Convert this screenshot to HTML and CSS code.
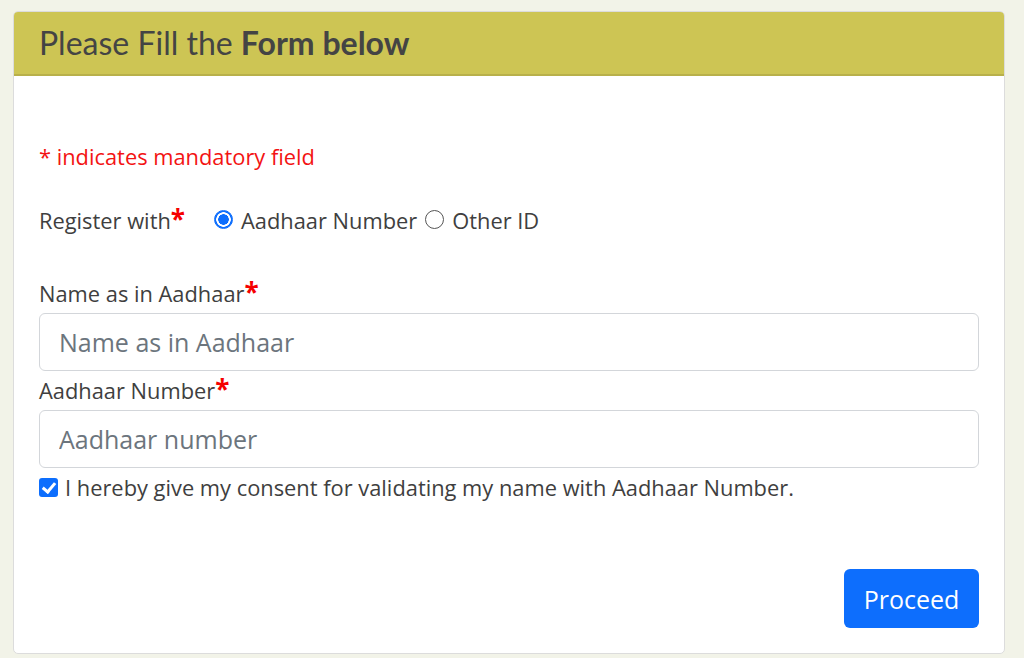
FILE: index.html
```html
<!DOCTYPE html>
<html lang="en">
<head>
<meta charset="utf-8">
<title>Please Fill the Form below</title>
<link rel="stylesheet" href="styles.css">
</head>
<body>
<div class="card">
  <div class="card-header">Please Fill the <b>Form below</b></div>
  <div class="card-body">
    <p class="mandatory">* indicates mandatory field</p>
    <div class="register-row">
      <span class="label-text">Register with<span class="star">*</span></span>
      <label class="radio-opt"><input type="radio" name="reg" class="radio" checked> Aadhaar Number</label>
      <label class="radio-opt"><input type="radio" name="reg" class="radio"> Other ID</label>
    </div>
    <label class="field-label" for="name">Name as in Aadhaar<span class="star">*</span></label>
    <input id="name" class="form-control" type="text" placeholder="Name as in Aadhaar">
    <label class="field-label second" for="aadhaar">Aadhaar Number<span class="star">*</span></label>
    <input id="aadhaar" class="form-control" type="text" placeholder="Aadhaar number">
    <label class="consent"><input type="checkbox" class="check" checked> I hereby give my consent for validating my name with Aadhaar Number.</label>
    <div class="actions">
      <button class="btn-primary" type="button">Proceed</button>
    </div>
  </div>
</div>
</body>
</html>
```
FILE: styles.css
```css
html, body {
  margin: 0;
  padding: 0;
}
body {
  background: #f2f3e8;
  font-family: "Open Sans", "Noto Sans", sans-serif;
  color: #3f3f3f;
  font-size: 21.85px;
}
.card {
  margin: 11px 0 0 13px;
  width: 992px;
  background: #fff;
  border: 1px solid #dcdcdc;
  border-radius: 5px;
  overflow: hidden;
  height: 643px;
  box-sizing: border-box;
}
.card-header {
  background: #cdc554;
  border-bottom: 2px solid #b8b04a;
  height: 62px;
  line-height: 62px;
  padding-left: 25px;
  font-family: "Lato", "Open Sans", sans-serif;
  font-size: 32px;
  color: #444;
}
.card-header b {
  font-weight: 700;
}
.card-body {
  padding: 0 25px 0 25px;
  display: flex;
  flex-direction: column;
}
.mandatory {
  color: #f31313;
  margin: 66px 0 0 0;
  line-height: 30px;
}
.register-row {
  margin-top: 34px;
  display: flex;
  align-items: center;
  line-height: 30px;
}
.label-text {
  margin-right: 29px;
}
.star {
  color: #f50000;
  font-weight: 700;
  font-size: 26px;
  line-height: 20px;
}
.radio-opt {
  display: flex;
  align-items: center;
  gap: 8px;
  margin-right: 8px;
}
.radio {
  appearance: none;
  -webkit-appearance: none;
  width: 19px;
  height: 19px;
  margin: 0;
  border: 1px solid #555;
  border-radius: 50%;
  background: #fff;
  position: relative;
  top: -2px;
  flex: none;
}
.radio:checked {
  border-color: #0d6efd;
  background: radial-gradient(circle, #0d6efd 0 5px, #fff 5.5px 7px, #0d6efd 7.5px);
}
.field-label {
  margin-top: 43px;
  line-height: 30px;
  display: block;
}
.field-label.second {
  margin-top: 5px;
}
.form-control {
  margin-top: 4px;
  height: 58px;
  box-sizing: border-box;
  border: 1.5px solid #d3d6da;
  border-radius: 6px;
  padding: 0 19px;
  font-family: "Open Sans", sans-serif;
  font-size: 25px;
  color: #444;
  outline: none;
}
.form-control::placeholder {
  color: #6c757d;
}
.consent {
  margin-top: 5px;
  display: flex;
  align-items: center;
  gap: 7px;
  line-height: 30px;
}
.check {
  appearance: none;
  -webkit-appearance: none;
  width: 19px;
  height: 19px;
  margin: 0;
  border-radius: 3px;
  background: #0d6efd;
  position: relative;
  top: -1px;
  flex: none;
}
.check::after {
  content: "";
  position: absolute;
  left: 6px;
  top: 2px;
  width: 5px;
  height: 10px;
  border: solid #fff;
  border-width: 0 3px 3px 0;
  transform: rotate(40deg);
}
.actions {
  display: flex;
  justify-content: flex-end;
  margin-top: 66px;
}
.btn-primary {
  background: #0d6efd;
  color: #fff;
  border: none;
  border-radius: 6px;
  width: 135px;
  height: 59px;
  font-family: "Open Sans", sans-serif;
  font-size: 25px;
}
```
